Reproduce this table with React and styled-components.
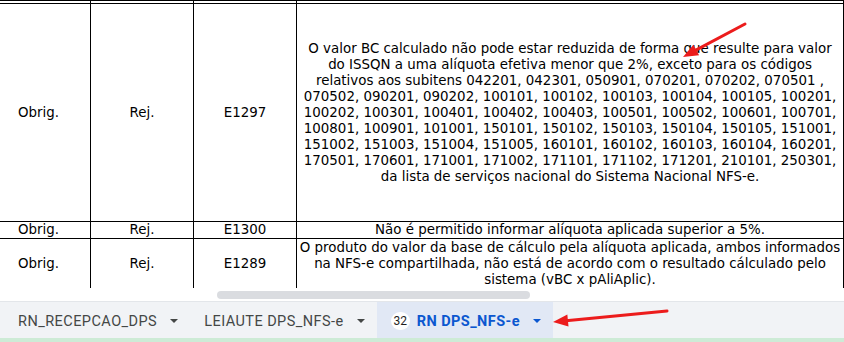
import React from "react";
import styled, { createGlobalStyle } from "styled-components";

const GlobalStyle = createGlobalStyle`
  html, body { margin: 0; padding: 0; background: #fff; }
  body { width: 844px; height: 342px; overflow: hidden; }
`;

const Page = styled.div`
  position: relative;
  width: 844px;
  height: 342px;
  overflow: hidden;
  display: flex;
  flex-direction: column;
`;

const Sheet = styled.div`
  height: 288px;
  overflow: hidden;
  background: #fff;
`;

const Grid = styled.table`
  border-collapse: collapse;
  table-layout: fixed;
  width: 858px;
  margin-left: -14px;
  font-family: "DejaVu Sans", Verdana, sans-serif;
  font-size: 13.4px;
  line-height: 16px;
  color: #000;
  td {
    border: 1px solid #000;
    padding: 0 2px;
    text-align: center;
    vertical-align: middle;
    white-space: nowrap;
    overflow: hidden;
  }
`;

const Row = styled.tr`
  height: ${(p) => p.$h}px;
`;

const ScrollStrip = styled.div`
  height: 13px;
  background: #fff;
  padding-top: 3px;
  box-sizing: border-box;
`;

const Thumb = styled.div`
  margin-left: 217px;
  width: 313px;
  height: 8px;
  border-radius: 4px;
  background: #dadce0;
`;

const TabBar = styled.div`
  height: 37px;
  box-sizing: border-box;
  border-top: 1px solid #e3e6ea;
  background: #f1f3f6;
  display: flex;
  align-items: stretch;
  padding-left: 4px;
  font-family: Roboto, "Liberation Sans", sans-serif;
  font-size: 14.5px;
  letter-spacing: 0.45px;
`;

const Tab = styled.div`
  display: flex;
  align-items: center;
  padding: 2px 12px 0 14px;
  background: ${(p) => (p.$active ? "#e1e8f5" : "transparent")};
  color: ${(p) => (p.$active ? "#0b57d0" : "#444746")};
  font-weight: ${(p) => (p.$active ? 700 : 400)};
`;

const Badge = styled.span`
  display: inline-flex;
  align-items: center;
  justify-content: center;
  width: 19px;
  height: 18px;
  border-radius: 9px;
  background: #fff;
  color: #1f1f1f;
  font-size: 12px;
  font-weight: 400;
  letter-spacing: 0;
  margin-right: 7px;
`;

const Caret = styled.span`
  width: 0;
  height: 0;
  margin-left: 13px;
  border-left: 4px solid transparent;
  border-right: 4px solid transparent;
  border-top: 4px solid currentColor;
`;

const GreenEdge = styled.div`
  height: 4px;
  background: #cdebd6;
`;

const Overlay = styled.svg`
  position: absolute;
  left: 0;
  top: 0;
  pointer-events: none;
`;

const Arrow = ({ from, to, color = "#ec1c1c" }) => {
  const dx = to[0] - from[0];
  const dy = to[1] - from[1];
  const len = Math.hypot(dx, dy);
  const ux = dx / len;
  const uy = dy / len;
  const head = 15;
  const half = 6;
  const bx = to[0] - ux * head;
  const by = to[1] - uy * head;
  const nx = -uy;
  const ny = ux;
  const pts = `${to[0]},${to[1]} ${bx + nx * half},${by + ny * half} ${bx - nx * half},${by - ny * half}`;
  return (
    <g>
      <line x1={from[0]} y1={from[1]} x2={bx + ux * 2} y2={by + uy * 2} stroke={color} strokeWidth="3" strokeLinecap="round" />
      <polygon points={pts} fill={color} />
    </g>
  );
};

const longText = [
  "O valor BC calculado não pode estar reduzida de forma que resulte para valor",
  "do ISSQN a uma alíquota efetiva menor que 2%, exceto para os códigos",
  "relativos aos subitens 042201, 042301, 050901, 070201, 070202, 070501 ,",
  "070502, 090201, 090202, 100101, 100102, 100103, 100104, 100105, 100201,",
  "100202, 100301, 100401, 100402, 100403, 100501, 100502, 100601, 100701,",
  "100801, 100901, 101001, 150101, 150102, 150103, 150104, 150105, 151001,",
  "151002, 151003, 151004, 151005, 160101, 160102, 160103, 160104, 160201,",
  "170501, 170601, 171001, 171002, 171101, 171102, 171201, 210101, 250301,",
  "da lista de serviços nacional do Sistema Nacional NFS-e.",
];

const thirdText = [
  "O produto do valor da base de cálculo pela alíquota aplicada, ambos informados",
  "na NFS-e compartilhada, não está de acordo com o resultado cálculado pelo",
  "sistema (vBC x pAliAplic).",
];

const Lines = ({ lines }) =>
  lines.map((l, i) => (
    <React.Fragment key={i}>
      {l}
      {i < lines.length - 1 && <br />}
    </React.Fragment>
  ));

const rows = [
  { h: 218, code: "E1297", text: longText },
  { h: 16, code: "E1300", text: ["Não é permitido informar alíquota aplicada superior a 5%."] },
  { h: 50, code: "E1289", text: thirdText },
];

export default function App() {
  return (
    <Page>
      <GlobalStyle />
      <Sheet>
        <Grid>
          <colgroup>
            <col style={{ width: 104 }} />
            <col style={{ width: 103 }} />
            <col style={{ width: 103 }} />
            <col />
          </colgroup>
          <tbody>
            <Row $h={3}>
              <td />
              <td />
              <td />
              <td />
            </Row>
            {rows.map((r) => (
              <Row key={r.code} $h={r.h}>
                <td>Obrig.</td>
                <td>Rej.</td>
                <td>{r.code}</td>
                <td>
                  <Lines lines={r.text} />
                </td>
              </Row>
            ))}
          </tbody>
        </Grid>
      </Sheet>
      <ScrollStrip>
        <Thumb />
      </ScrollStrip>
      <TabBar>
        <Tab>
          RN_RECEPCAO_DPS
          <Caret />
        </Tab>
        <Tab>
          LEIAUTE DPS_NFS-e
          <Caret />
        </Tab>
        <Tab $active>
          <Badge>32</Badge>
          RN DPS_NFS-e
          <Caret />
        </Tab>
      </TabBar>
      <GreenEdge />
      <Overlay width="844" height="342" viewBox="0 0 844 342">
        <Arrow from={[745, 24]} to={[683, 57]} />
        <Arrow from={[667, 311]} to={[553, 322]} />
      </Overlay>
    </Page>
  );
}
